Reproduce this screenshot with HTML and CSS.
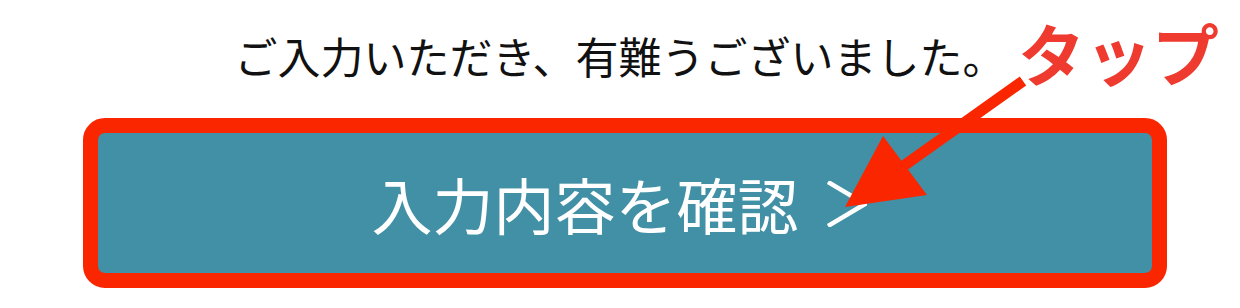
FILE: index.html
```html
<!DOCTYPE html>
<html lang="ja">
<head>
<meta charset="utf-8">
<title>入力内容を確認</title>
<link rel="stylesheet" href="styles.css">
</head>
<body>
<div class="stage">
  <p class="message">ご入力いただき、有難うございました。</p>
  <div class="btn-wrap">
    <div class="btn">
      <span class="btn-label">入力内容を確認</span>
      <svg class="chevron" width="40" height="46" viewBox="0 0 40 46" aria-hidden="true">
        <polyline points="1,1 38,23 1,45" fill="none" stroke="#ffffff" stroke-width="4.5" stroke-linejoin="miter"/>
      </svg>
    </div>
  </div>
  <svg class="annot-arrow" width="1240" height="308" viewBox="0 0 1240 308" aria-hidden="true">
    <line x1="1023" y1="81" x2="895" y2="172" stroke="#fa2600" stroke-width="11"/>
    <polygon points="845,207 883,136 927,195" fill="#fa2600"/>
  </svg>
  <span class="annot-label">タップ</span>
</div>
</body>
</html>
```
FILE: styles.css
```css
html, body {
  margin: 0;
  padding: 0;
  background: #ffffff;
}

.stage {
  position: relative;
  width: 1240px;
  height: 308px;
  overflow: hidden;
  font-family: "Noto Sans CJK JP", "Noto Sans", sans-serif;
}

.message {
  margin: 0;
  padding-top: 30px;
  height: 51px;
  line-height: 51px;
  font-size: 43px;
  font-weight: 400;
  color: #111111;
  text-align: center;
  letter-spacing: 0;
}

.btn-wrap {
  margin: 37px 73px 0 83px;
}

.btn {
  box-sizing: border-box;
  height: 170px;
  border: 15px solid #fa2600;
  border-radius: 22px;
  background: #4290a5;
  display: flex;
  align-items: center;
  justify-content: center;
  padding-right: 12px;
  gap: 28px;
}

.btn-label {
  font-size: 61px;
  line-height: 1;
  color: #ffffff;
  font-weight: 400;
}

.chevron {
  display: block;
  margin-top: 2px;
}

.annot-arrow {
  position: absolute;
  left: 0;
  top: 0;
  pointer-events: none;
}

.annot-label {
  position: absolute;
  left: 1018px;
  top: 18px;
  font-size: 67px;
  line-height: 67px;
  font-weight: 700;
  color: #ef3a2f;
  -webkit-text-stroke: 8px #ffffff;
  paint-order: stroke fill;
}
```
